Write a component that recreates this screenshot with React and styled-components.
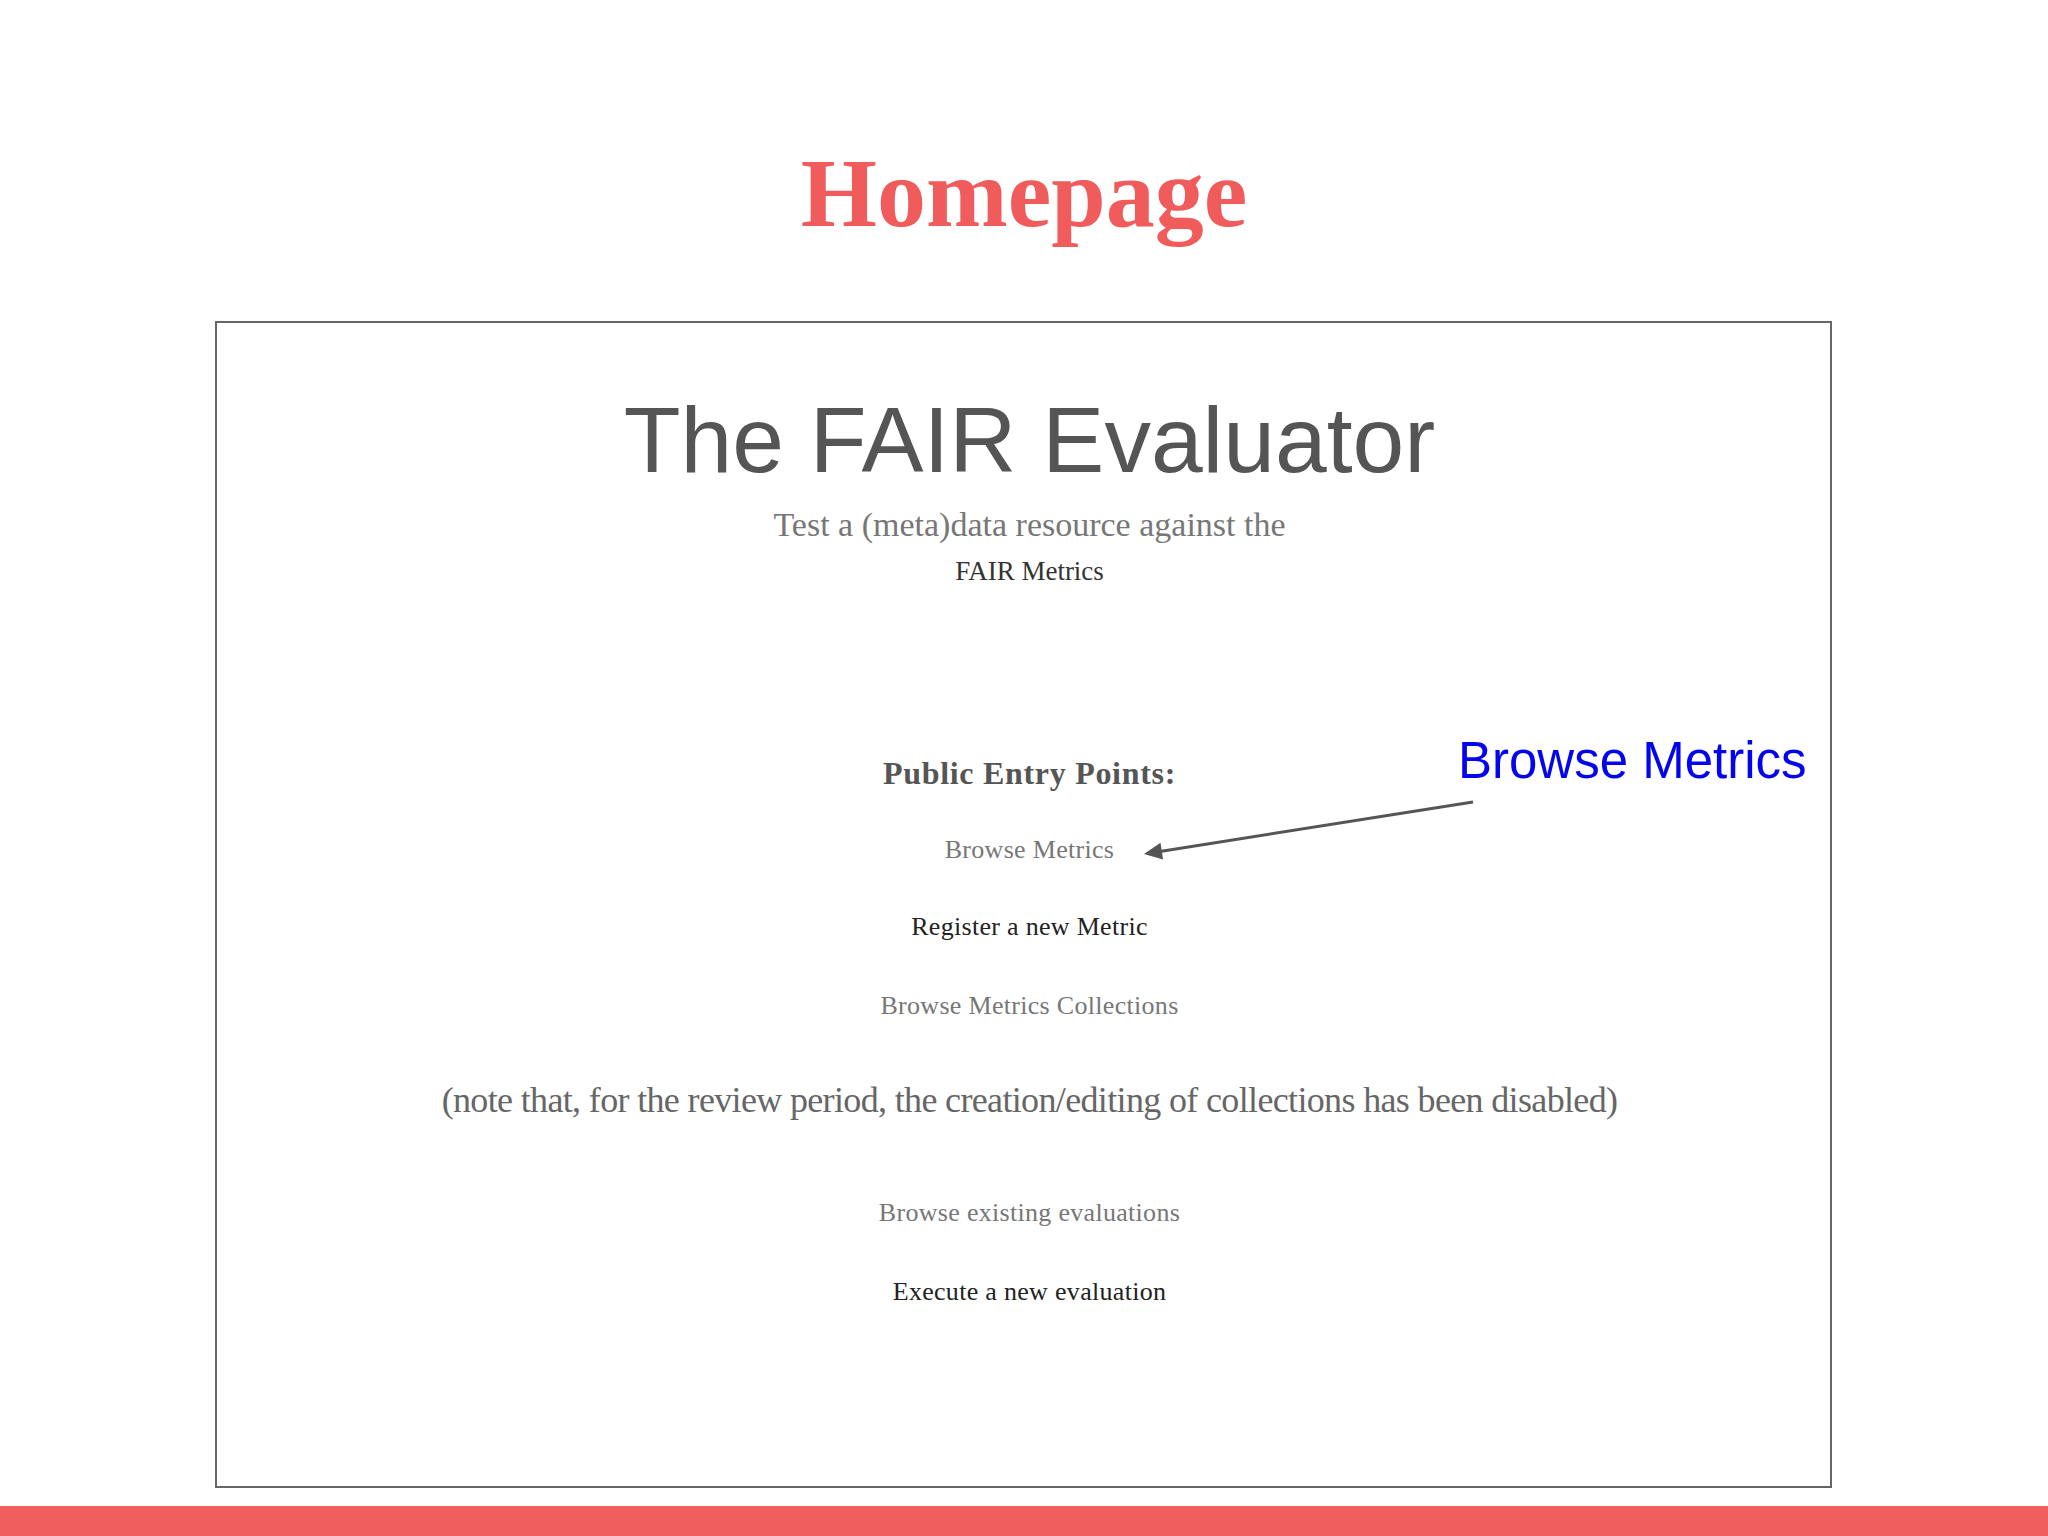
import React from "react";
import styled, { createGlobalStyle } from "styled-components";

const Global = createGlobalStyle`
  html, body { margin: 0; padding: 0; background: #ffffff; }
  #root { width: 2048px; height: 1536px; }
`;

const Slide = styled.div`
  width: 2048px;
  height: 1536px;
  display: flex;
  flex-direction: column;
  background: #ffffff;
  overflow: hidden;
`;

const Title = styled.h1`
  margin: 0;
  padding-top: 144px;
  text-align: center;
  font-family: "Liberation Serif", "Times New Roman", serif;
  font-weight: 700;
  font-size: 98px;
  line-height: 1;
  color: #f05c5c;
`;

const Frame = styled.div`
  position: relative;
  box-sizing: border-box;
  margin: 79px 0 0 215px;
  width: 1617px;
  height: 1167px;
  border: 2px solid #666666;
  display: flex;
  flex-direction: column;
  align-items: center;
  padding: 71px 0 0 12px;
`;

const Heading = styled.div`
  font-family: "Liberation Sans", Arial, sans-serif;
  font-size: 93px;
  line-height: 1;
  color: #555555;
  white-space: nowrap;
`;

const Line = styled.div`
  margin-top: ${(p) => p.$gap}px;
  font-family: "Liberation Serif", "Times New Roman", serif;
  font-size: ${(p) => p.$size || 26}px;
  font-weight: ${(p) => (p.$bold ? 700 : 400)};
  letter-spacing: ${(p) => p.$spacing || 0}px;
  line-height: 1;
  color: ${(p) => p.$color || "#777777"};
  white-space: nowrap;
`;

const Callout = styled.div`
  position: absolute;
  left: 1241px;
  top: 412px;
  font-family: "Liberation Sans", Arial, sans-serif;
  font-size: 51px;
  line-height: 1;
  color: #0404ee;
  white-space: nowrap;
`;

const ArrowSvg = styled.svg`
  position: absolute;
  left: 913px;
  top: 467px;
  width: 350px;
  height: 80px;
  overflow: visible;
`;

const Bar = styled.div`
  margin-top: 18px;
  height: 30px;
  background: #f15e5e;
`;

export default function App() {
  return (
    <>
      <Global />
      <Slide>
        <Title>Homepage</Title>
        <Frame>
          <Heading>The FAIR Evaluator</Heading>
          <Line $gap={21} $size={34} $color="#777777">
            Test a (meta)data resource against the
          </Line>
          <Line $gap={16} $size={27} $color="#333333">
            FAIR Metrics
          </Line>
          <Line $gap={172} $size={32} $bold $spacing={0.7} $color="#555555">
            Public Entry Points:
          </Line>
          <Line $gap={48} $size={26} $spacing={0.3} $color="#777777">
            Browse Metrics
          </Line>
          <Line $gap={51} $size={26} $spacing={0.3} $color="#222222">
            Register a new Metric
          </Line>
          <Line $gap={53} $size={26} $spacing={0.3} $color="#777777">
            Browse Metrics Collections
          </Line>
          <Line $gap={63} $size={36} $spacing={-0.65} $color="#666666">
            (note that, for the review period, the creation/editing of
            collections has been disabled)
          </Line>
          <Line $gap={82} $size={26} $spacing={0.3} $color="#777777">
            Browse existing evaluations
          </Line>
          <Line $gap={53} $size={26} $spacing={0.3} $color="#222222">
            Execute a new evaluation
          </Line>
          <Callout>Browse Metrics</Callout>
          <ArrowSvg viewBox="0 0 350 80">
            <line
              x1="343"
              y1="12"
              x2="30"
              y2="61.5"
              stroke="#555555"
              strokeWidth="3"
            />
            <polygon points="14,64 33.1,69.6 30.5,52.8" fill="#555555" />
          </ArrowSvg>
        </Frame>
        <Bar />
      </Slide>
    </>
  );
}
